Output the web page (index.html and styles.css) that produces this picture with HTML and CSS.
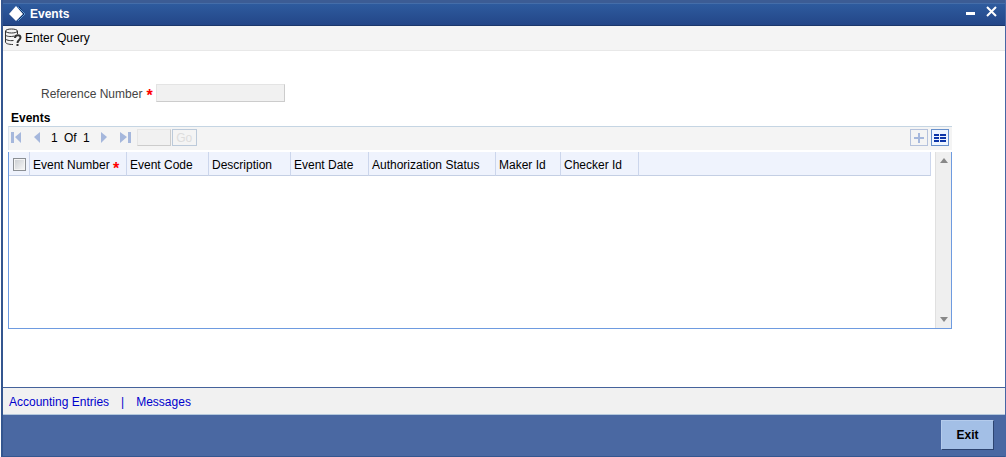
FILE: index.html
```html
<!DOCTYPE html>
<html lang="en">

<head>
    <meta charset="UTF-8" />
    <meta name="viewport" content="width=device-width, initial-scale=1.0" />
    <title>Events</title>
    <link rel="stylesheet" href="styles.css">
</head>

<body>
    <div class="window">
        <header class="title-bar">
            <svg class="logo" width="20" height="18" viewBox="0 0 20 18" aria-hidden="true">
                <path d="M13 1l6 8-6 7z" fill="#0c2c66" />
                <path d="M12 2l7 7-7 7" fill="none" stroke="#5f9ad0" />
                <path d="M10 1l7 8-7 7-7-7z" fill="#fff" />
            </svg>
            <h1>Events</h1>
            <div class="window-buttons">
                <button type="button" aria-label="Minimize">
                    <svg width="11" height="12"><path d="M1 6h9v3H1z" fill="#fff" /></svg>
                </button>
                <button type="button" aria-label="Close">
                    <svg width="12" height="12"><path d="M1 1l9 9M10 1L1 10" stroke="#fff" stroke-width="2" /></svg>
                </button>
            </div>
        </header>

        <div class="toolbar">
            <button type="button" class="tool">
                <svg width="18" height="20" viewBox="0 0 18 20" fill="none" stroke="#333" aria-hidden="true">
                    <ellipse cx="7.500" cy="3" rx="6" ry="2" />
                    <path d="M1.500 3v11c0 1.500 3 2.500 7.500 2.500M13.500 3v3M1.500 6.500c0 2 5 2.500 9 1.500M1.500 10.500c0 1.500 4 2.500 8 2" />
                    <path d="M11 10c0-4 5.500-3.500 5.500-.5 0 2.500-3 2.500-3 5.500" stroke-width="2" />
                    <path d="M12.500 16h2v2h-2z" fill="#333" stroke="none" />
                </svg>
                Enter Query
            </button>
        </div>

        <main class="content">
            <div class="field">
                <label for="reference">Reference Number</label>
                <span class="required">*</span>
                <input type="text" id="reference" disabled>
            </div>

            <h2>Events</h2>
            <div class="pager">
                <button type="button" disabled aria-label="First">
                    <svg width="12" height="12"><path d="M0 0h3v11H0zM10 0v11L4 5z" /></svg>
                </button>
                <button type="button" disabled aria-label="Previous">
                    <svg width="12" height="12"><path d="M7 0v11L1 5z" /></svg>
                </button>
                <span class="page-count">1 Of 1</span>
                <button type="button" disabled aria-label="Next">
                    <svg width="12" height="12"><path d="M3 0v11l6-6z" /></svg>
                </button>
                <button type="button" disabled aria-label="Last">
                    <svg width="12" height="12"><path d="M0 0v11l7-6zM8 0h3v11H8z" /></svg>
                </button>
                <input type="text" class="page-input" disabled aria-label="Page">
                <button type="button" class="go" disabled>Go</button>
                <div class="row-buttons">
                    <button type="button" class="add" disabled aria-label="Add row">
                        <svg width="12" height="12"><path d="M5 1h2v4h4v2H7v4H5V7H1V5h4z" /></svg>
                    </button>
                    <button type="button" class="single-view" aria-label="Single record view">
                        <svg width="12" height="10"><path d="M0 1h5v2H0zM6 1h6v2H6zM0 4h5v2H0zM6 4h6v2H6zM0 7h5v2H0zM6 7h6v2H6z" /></svg>
                    </button>
                </div>
            </div>

            <div class="grid">
                <div class="grid-body">
                    <table>
                        <thead>
                            <tr>
                                <th class="col-check"><input type="checkbox" aria-label="Select all"></th>
                                <th class="col-number">Event Number <span class="required">*</span></th>
                                <th class="col-code">Event Code</th>
                                <th class="col-code">Description</th>
                                <th class="col-date">Event Date</th>
                                <th class="col-status">Authorization Status</th>
                                <th class="col-maker">Maker Id</th>
                                <th class="col-date">Checker Id</th>
                                <th class="col-rest"></th>
                            </tr>
                        </thead>
                        <tbody></tbody>
                    </table>
                </div>
                <div class="scrollbar" aria-hidden="true">
                    <svg width="8" height="5"><path d="M0 5l4-5 4 5z" fill="#888" /></svg>
                    <svg width="8" height="5"><path d="M0 0l4 5 4-5z" fill="#888" /></svg>
                </div>
            </div>
        </main>

        <nav class="links">
            <a href="#">Accounting Entries</a>
            <span>|</span>
            <a href="#">Messages</a>
        </nav>

        <footer>
            <button type="button" class="exit">Exit</button>
        </footer>
    </div>
</body>

</html>
```

FILE: styles.css
```css
* {
    box-sizing: border-box;
}

body {
    margin: 0;
    font-family: "Liberation Sans", Arial, sans-serif;
    font-size: 12px;
    line-height: 14px;
    color: #000;
    background-color: #fff;
}

button,
input {
    font: inherit;
    margin: 0;
    padding: 0;
}

button {
    border: none;
    background: none;
}

svg {
    display: block;
}

.window {
    display: flex;
    flex-direction: column;
    min-height: 100vh;
    margin-left: 1px;
    border-left: 2px solid #34568f;
    border-right: 1px solid #4766a4;
}

.title-bar {
    display: flex;
    align-items: center;
    height: 26px;
    padding: 3px 7px 0 3px;
    border-bottom: 1px solid #1b376b;
    background: linear-gradient(#3c5c94 0, #3c5c94 3px, #5b80b4 3px, #2e5b9e 4px, #234688 100%);
}

.title-bar h1 {
    margin: 0 0 0 4px;
    font-size: 12px;
    color: #fff;
}

.window-buttons {
    display: flex;
    gap: 10px;
    margin-left: auto;
    padding-bottom: 5px;
}

.toolbar {
    display: flex;
    align-items: center;
    height: 25px;
    border-bottom: 1px solid #e8e8e8;
    background-color: #f4f4f4;
}

.tool {
    display: flex;
    align-items: center;
    gap: 3px;
    padding-left: 1px;
}

.content {
    display: flex;
    flex-direction: column;
    flex: 1;
    padding: 33px 53px 58px 5px;
}

.field {
    display: flex;
    align-items: center;
    padding-left: 33px;
    color: #444;
}

.field label {
    padding-top: 2px;
}

.required {
    color: #f00;
    font-size: 16px;
    font-weight: bold;
    line-height: 12px;
}

.field .required {
    margin: 6px 3px 0 4px;
}

.field input {
    width: 129px;
    height: 18px;
    border: 1px solid #e4e4e4;
    border-right-color: #ccc;
    border-bottom-color: #ccc;
    background-color: #f1f1f1;
}

.content h2 {
    margin: 8px 0 0 3px;
    font-size: 12px;
    line-height: 16px;
}

.pager {
    display: flex;
    align-items: center;
    height: 24px;
    padding: 0 3px 2px 2px;
    border-top: 1px solid #c5d5e3;
    border-left: 1px solid #dce4ee;
    background-color: #f4f4f4;
    fill: #a5b7dc;
}

.pager button + button {
    margin-left: 10px;
}

.page-count {
    margin: 0 8px 0 6px;
    word-spacing: 3px;
}

.pager .page-input {
    width: 34px;
    height: 17px;
    margin: 0 1px 0 5px;
    border: 1px solid #e6e6e6;
    border-right-color: #ccc;
    border-bottom-color: #ccc;
    background-color: #f1f1f1;
}

.pager .go {
    width: 25px;
    height: 17px;
    border: 1px solid #bccada;
    color: #ddd;
}

.row-buttons {
    display: flex;
    margin-left: auto;
}

.row-buttons button {
    display: flex;
    align-items: center;
    justify-content: center;
    width: 18px;
    height: 17px;
    border: 1px solid #b5c2dc;
}

.row-buttons .single-view {
    margin-left: 3px;
    border-color: #668fcb;
    background-color: #eef5ff;
    fill: #0c35a8;
}

.grid {
    display: flex;
    flex: 1;
    margin-top: 2px;
    border: 1px solid #6e9be0;
    border-top: none;
}

.grid-body {
    flex: 1;
    padding-right: 4px;
}

table {
    width: 100%;
    table-layout: fixed;
    border-collapse: separate;
    border-spacing: 0;
}

th {
    height: 24px;
    padding: 2px 0 0 3px;
    border-right: 1px solid #ccd6ec;
    border-bottom: 1px solid #c4cfe4;
    background-color: #eff3fd;
    font-weight: normal;
    text-align: left;
    white-space: nowrap;
}

th .required {
    line-height: 0;
    vertical-align: -5px;
}

th input[type="checkbox"] {
    display: block;
    appearance: none;
    width: 13px;
    height: 13px;
    margin-left: 1px;
    border: 1px solid #8b8f94;
    background: linear-gradient(135deg, #c9cdd2, #f8f8f8);
    box-shadow: inset 0 0 0 1px #f4f4f4;
}

.col-check {
    width: 21px;
}

.col-number {
    width: 97px;
}

.col-code {
    width: 82px;
}

.col-date {
    width: 78px;
}

.col-status {
    width: 127px;
}

.col-maker {
    width: 65px;
}

.scrollbar {
    display: flex;
    flex-direction: column;
    align-items: center;
    justify-content: space-between;
    width: 16px;
    padding: 6px 0;
    border-left: 1px solid #e0e0e0;
    background-color: #efefef;
}

.links {
    display: flex;
    align-items: center;
    gap: 12px;
    height: 27px;
    padding: 1px 0 0 6px;
    border-top: 1px solid #45629b;
    background-color: #f1f1f1;
    color: #00c;
}

.links a {
    color: #00c;
    text-decoration: none;
}

footer {
    display: flex;
    justify-content: flex-end;
    height: 43px;
    padding: 5px 11px 0 0;
    border-top: 1px solid #b4c8dc;
    border-bottom: 1px solid #34568f;
    background-color: #4a68a2;
}

.exit {
    width: 53px;
    height: 30px;
    border: 1px solid #b4cbec;
    border-right-color: #2d4470;
    border-bottom-color: #2d4470;
    background-color: #a3bfe6;
    font-weight: bold;
}
```
